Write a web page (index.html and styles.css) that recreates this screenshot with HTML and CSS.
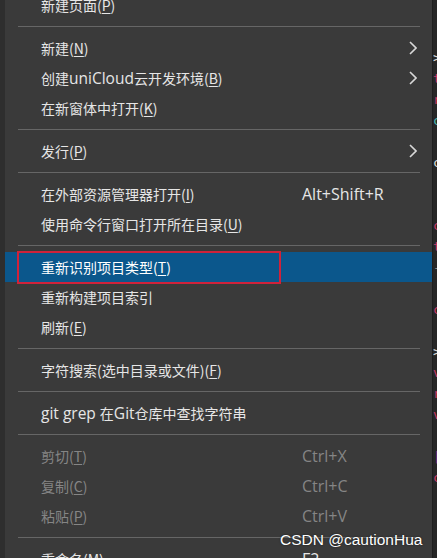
FILE: index.html
```html
<!DOCTYPE html>
<html lang="zh-CN">
<head>
  <meta charset="UTF-8">
  <title>右键菜单</title>
  <link rel="stylesheet" href="styles.css">
</head>
<body>
  <div class="screen">
    <div class="gutter"></div>

    <!-- Context menu -->
    <ul class="menu">
      <li class="item"><span class="label">新建页面(<u>P</u>)</span></li>
      <li class="sep"></li>
      <li class="item"><span class="label">新建(<u>N</u>)</span><span class="key"></span><svg class="arrow" width="8" height="14" viewBox="0 0 8 14"><polyline points="1,1 7,7 1,13" /></svg></li>
      <li class="item"><span class="label">创建<span class="lat">uniCloud</span>云开发环境(<u>B</u>)</span><span class="key"></span><svg class="arrow" width="8" height="14" viewBox="0 0 8 14"><polyline points="1,1 7,7 1,13" /></svg></li>
      <li class="item"><span class="label">在新窗体中打开(<u>K</u>)</span></li>
      <li class="sep"></li>
      <li class="item"><span class="label">发行(<u>P</u>)</span><span class="key"></span><svg class="arrow" width="8" height="14" viewBox="0 0 8 14"><polyline points="1,1 7,7 1,13" /></svg></li>
      <li class="sep"></li>
      <li class="item"><span class="label">在外部资源管理器打开(<u>I</u>)</span><span class="key">Alt+Shift+R</span></li>
      <li class="item"><span class="label">使用命令行窗口打开所在目录(<u>U</u>)</span></li>
      <li class="sep"></li>
      <li class="item active">
        <span class="label">重新识别项目类型(<u>T</u>)</span>
        <span class="mark"></span>
      </li>
      <li class="item"><span class="label">重新构建项目索引</span></li>
      <li class="item"><span class="label">刷新(<u>E</u>)</span></li>
      <li class="sep"></li>
      <li class="item"><span class="label">字符搜索(选中目录或文件)(<u>F</u>)</span></li>
      <li class="sep"></li>
      <li class="item"><span class="label"><span class="lat">git grep </span>在<span class="lat">Git</span>仓库中查找字符串</span></li>
      <li class="sep"></li>
      <li class="item disabled"><span class="label">剪切(<u>T</u>)</span><span class="key">Ctrl+X</span></li>
      <li class="item disabled"><span class="label">复制(<u>C</u>)</span><span class="key">Ctrl+C</span></li>
      <li class="item disabled"><span class="label">粘贴(<u>P</u>)</span><span class="key">Ctrl+V</span></li>
      <li class="sep"></li>
      <li class="item"><span class="label">重命名(<u>M</u>)</span><span class="key">F2</span></li>
    </ul>

    <!-- Editor edge behind the menu -->
    <div class="editor">
      <span class="w">&gt;</span>
      <span class="p">t</span>
      <span class="p">r</span>
      <span class="t">c</span>
      <span></span>
      <span class="w">c</span>
      <span></span>
      <span></span>
      <span class="p">c</span>
      <span class="p">t</span>
      <span class="g">-</span>
      <span></span>
      <span class="p">c</span>
      <span></span>
      <span class="w">&gt;</span>
      <span class="p">v</span>
      <span class="p">r</span>
      <span class="p">v</span>
      <span></span>
      <span class="m">|</span>
      <span class="p">c</span>
    </div>
  </div>

  <div class="watermark">CSDN @cautionHua</div>
</body>
</html>
```

FILE: styles.css
```css
/* Reset */
* {
  margin: 0;
  padding: 0;
  box-sizing: border-box;
}

body {
  background-color: #262626;
  color: #e6e6e6;
  font-family: "Noto Sans CJK SC", "Noto Sans", sans-serif;
  font-size: 14px;
  height: 558px;
  overflow: hidden;
  position: relative;
}

.screen {
  display: flex;
  height: 100%;
}

.gutter {
  width: 5px;
  background-color: #2e2e2e;
}

/* Menu */
.menu {
  list-style: none;
  width: 427px;
  background-color: #3a3a3a;
  margin-top: -10px;
}

.item {
  display: flex;
  align-items: center;
  height: 30px;
  padding: 0 15px 0 36px;
  position: relative;
  white-space: nowrap;
}

.item u {
  text-decoration: underline;
  text-underline-offset: 2px;
  text-decoration-thickness: 1px;
}

.label {
  flex: 1;
}

.lat {
  font-family: "Open Sans", "Noto Sans", sans-serif;
  font-size: 15.5px;
}

.key {
  width: 115px;
  font-family: "Open Sans", "Noto Sans", sans-serif;
  font-size: 16px;
}

.arrow {
  fill: none;
  stroke: #d8d8d8;
  stroke-width: 1.6;
}

.sep {
  height: 13px;
  display: flex;
  align-items: center;
  padding: 0 12px 0 13px;
}

.sep::before {
  content: "";
  flex: 1;
  height: 1px;
  background-color: #666666;
}

.active {
  background-color: #0b578c;
  color: #ffffff;
}

/* red annotation box */
.mark {
  position: absolute;
  left: 12px;
  top: -1px;
  width: 264px;
  height: 33px;
  border: 2px solid #d0223a;
}

.disabled {
  color: #858585;
}

/* editor behind */
.editor {
  flex: 1;
  display: flex;
  flex-direction: column;
  padding-top: 47px;
  font-family: "DejaVu Sans Mono", monospace;
  font-size: 13px;
  line-height: 21px;
  overflow: hidden;
  border-left: 1px solid #1e1e1e;
}

.editor span {
  height: 21px;
}

.editor .w { color: #dddddd; }
.editor .p { color: #c83a6a; }
.editor .t { color: #4ab8b0; }
.editor .g { color: #888888; }
.editor .m { color: #b03080; }

/* watermark */
.watermark {
  position: absolute;
  left: 280px;
  top: 531px;
  font-family: "Liberation Sans", Arial, sans-serif;
  font-size: 15.5px;
  color: #ffffff;
  text-shadow: 0 0 2px rgba(0, 0, 0, 0.6);
}
```
